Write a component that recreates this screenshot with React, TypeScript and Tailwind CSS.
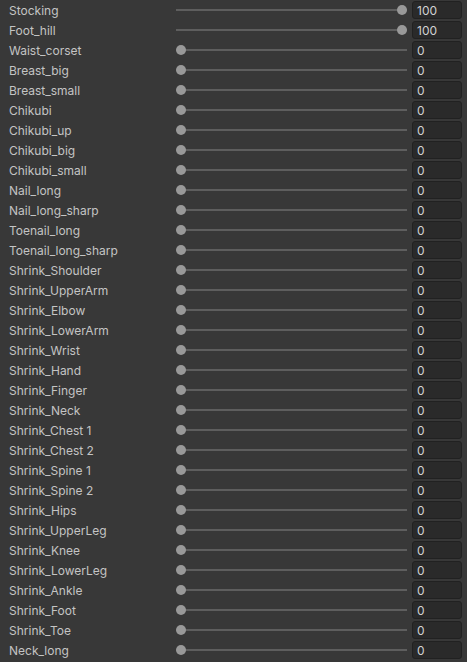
const shapes: [string, number][] = [
  ["Stocking", 100],
  ["Foot_hill", 100],
  ["Waist_corset", 0],
  ["Breast_big", 0],
  ["Breast_small", 0],
  ["Chikubi", 0],
  ["Chikubi_up", 0],
  ["Chikubi_big", 0],
  ["Chikubi_small", 0],
  ["Nail_long", 0],
  ["Nail_long_sharp", 0],
  ["Toenail_long", 0],
  ["Toenail_long_sharp", 0],
  ["Shrink_Shoulder", 0],
  ["Shrink_UpperArm", 0],
  ["Shrink_Elbow", 0],
  ["Shrink_LowerArm", 0],
  ["Shrink_Wrist", 0],
  ["Shrink_Hand", 0],
  ["Shrink_Finger", 0],
  ["Shrink_Neck", 0],
  ["Shrink_Chest 1", 0],
  ["Shrink_Chest 2", 0],
  ["Shrink_Spine 1", 0],
  ["Shrink_Spine 2", 0],
  ["Shrink_Hips", 0],
  ["Shrink_UpperLeg", 0],
  ["Shrink_Knee", 0],
  ["Shrink_LowerLeg", 0],
  ["Shrink_Ankle", 0],
  ["Shrink_Foot", 0],
  ["Shrink_Toe", 0],
  ["Neck_long", 0],
];

function Slider({ value }: { value: number }) {
  return (
    <div className="relative h-5 w-[236px] shrink-0">
      <div className="absolute left-[5px] right-0 top-[9px] h-[2px] bg-[#5e5e5e]" />
      <div
        className="absolute top-[5px] w-[10px] h-[10px] rounded-full bg-[#999999]"
        style={{ left: `${5 + (value / 100) * 221}px` }}
      />
    </div>
  );
}

export default function App() {
  return (
    <div
      className="w-[467px] h-[662px] bg-[#383838] overflow-hidden"
      style={{ fontFamily: "Inter, 'Noto Sans', sans-serif" }}
    >
      {shapes.map(([name, value]) => (
        <div key={name} className="flex items-center h-5">
          <div className="w-[171px] shrink-0 whitespace-nowrap pl-[9px] pt-[1px] text-[12px] text-[#c4c4c4] leading-5">
            {name}
          </div>
          <Slider value={value} />
          <div className="ml-[5px] w-[50px] h-[18px] shrink-0 rounded-[3px] bg-[#2a2a2a] border border-[#212121] text-[12px] text-[#d2d2d2] leading-[17px] pl-[4px]">
            {value}
          </div>
        </div>
      ))}
    </div>
  );
}
